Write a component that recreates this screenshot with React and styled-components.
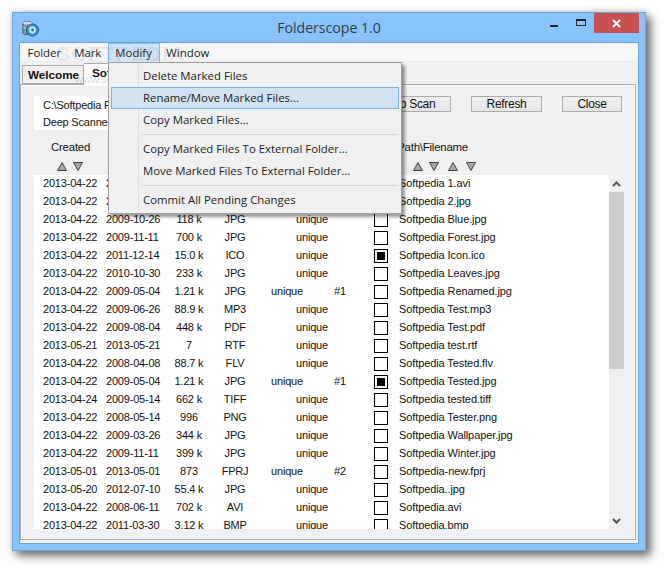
import React from "react";
import styled, { createGlobalStyle } from "styled-components";

const GlobalStyle = createGlobalStyle`
	html, body {
		margin: 0;
		padding: 0;
		background: #fff;
	}
	body {
		font-family: "Liberation Sans", Arial, sans-serif;
		font-size: 11px;
		color: #111;
	}
`

const Page = styled.div`
	width: 666px;
	height: 572px;
	padding: 12px 0 0 12px;
	box-sizing: border-box;
	overflow: hidden;
`

const Frame = styled.div`
	width: 634px;
	height: 539px;
	box-sizing: border-box;
	display: flex;
	flex-direction: column;
	padding: 0 6px 6px;
	background: #88c3fb;
	border: 1px solid #6aa5dc;
	box-shadow: 5px 5px 9px rgba(0,0,0,0.55), 0 0 7px rgba(0,0,0,0.2);
`

const TitleBar = styled.div`
	height: 29px;
	flex: none;
	display: grid;
	grid-template-columns: 1fr auto 1fr;
	align-items: center;
`

const AppIcon = styled.svg`
	width: 17px;
	height: 17px;
	margin: 1px 0 0 3px;
`

const Title = styled.div`
	font-family: "Open Sans", sans-serif;
	font-size: 14.1px;
	color: #333c40;
	margin-top: -1px;
`

const Controls = styled.div`
	justify-self: end;
	display: flex;
	align-items: flex-start;
	height: 100%;
`

const Minimize = styled.div`
	width: 8px;
	height: 2px;
	margin: 12px 18px 0 0;
	background: #222;
`

const Restore = styled.div`
	width: 10px;
	height: 7px;
	margin: 6px 8px 0 0;
	box-sizing: border-box;
	border: 1px solid #222;
	border-top-width: 2px;
`

const CloseBox = styled.div`
	width: 45px;
	height: 20px;
	display: grid;
	place-items: center;
	background: #c75050;
`

const Client = styled.div`
	position: relative;
	flex: 1;
	min-height: 0;
	display: flex;
	flex-direction: column;
	background: #f0f0f0;
	border: 1px solid #6aa5dc;
`

const MenuBar = styled.div`
	height: 19px;
	flex: none;
	display: flex;
	padding-left: 1px;
	background: #f5f6f7;
	border-bottom: 1px solid #e9ecee;
	box-sizing: border-box;
	font-family: "Open Sans", sans-serif;
	font-size: 11.4px;
	color: #1d1d1d;
`

const MenuTitle = styled.div`
	display: flex;
	align-items: center;
	padding: ${props => props.$open ? `0 7px 2px 6.5px` : `0 5.5px 2px`};
	box-sizing: border-box;
	height: 20px;
	border: 1px solid ${props => props.$open ? `#84bdf0` : `transparent`};
	background: ${props => props.$open ? `#cfe4f6` : `transparent`};
`

const TabStrip = styled.div`
	height: 22px;
	flex: none;
	display: flex;
	align-items: flex-end;
	padding-left: 2px;
	font-weight: 700;
	font-size: 11.7px;
`

const Tab = styled.div`
	box-sizing: border-box;
	height: ${props => props.$active ? `22px` : `19px`};
	width: ${props => props.$active ? `80px` : `62px`};
	margin-bottom: ${props => props.$active ? `-1px` : `0`};
	padding: ${props => props.$active ? `2px 0 0 8px` : `2px 0 0 5px`};
	background: ${props => props.$active ? `#fff` : `#f0f0f0`};
	border: 1px solid #acacac;
	border-bottom: ${props => props.$active ? `none` : `1px solid #acacac`};
	border-left: ${props => props.$active ? `none` : `1px solid #acacac`};
	position: relative;
	z-index: 1;
`

const Panel = styled.div`
	flex: 1;
	min-height: 0;
	margin: 0 2px 3px 0;
	padding: 11px 11px 10px 13px;
	display: flex;
	flex-direction: column;
	box-sizing: border-box;
	background: #f0f0f0;
	border: 1px solid #acacac;
	box-shadow: inset 0 0 0 1px #fff;
`

const ControlRow = styled.div`
	height: 34px;
	flex: none;
	display: flex;
	align-items: flex-start;
`

const InfoBox = styled.div`
	width: 300px;
	height: 34px;
	padding: 0 9px;
	box-sizing: border-box;
	display: flex;
	flex-direction: column;
	justify-content: space-around;
	background: #fff;
	letter-spacing: -0.2px;
`

const Button = styled.div`
	width: ${props => props.$width}px;
	margin-left: ${props => props.$gap}px;
	height: 16px;
	box-sizing: border-box;
	display: grid;
	place-items: center;
	background: linear-gradient(#f0f0f0, #e5e5e5);
	border: 1px solid #acacac;
	font-size: 12px;
	letter-spacing: -0.3px;
`

const HeaderRow = styled.div`
	height: 18px;
	margin-top: 8px;
	flex: none;
	display: flex;
	justify-content: space-between;
	align-items: center;
	padding: 0 156px 0 17px;
	font-size: 11.4px;
	letter-spacing: -0.2px;
`

const SortRow = styled.div`
	height: 19px;
	flex: none;
	display: flex;
	align-items: center;
	padding: 2px 0 0 23px;
	box-sizing: border-box;
`

const Arrow = styled.svg`
	width: 10px;
	height: 9px;
	flex: none;
	margin-left: ${props => props.$gap}px;
`

const ListArea = styled.div`
	flex: 1;
	min-height: 0;
	display: flex;
`

const List = styled.div`
	flex: 1;
	overflow: hidden;
	background: #fff;
`

const Rows = styled.div`
	margin-top: -1px;
`

const Row = styled.div`
	height: 18px;
	display: grid;
	grid-template-columns: 68px 62px 50px 42px 112px 25px 1fr;
	align-items: center;
	letter-spacing: -0.2px;
	white-space: nowrap;
`

const DateCell = styled.div`
	padding-left: ${props => props.$first ? `9px` : `4px`};
`

const CenterCell = styled.div`
	text-align: center;
`

const DupCell = styled.div`
	display: grid;
	grid-template-columns: 62px 44px;
	text-align: center;
`

const Check = styled.div`
	width: 14px;
	height: 14px;
	margin: 2px 0 0 6px;
	box-sizing: border-box;
	padding: 2px;
	border: 1px solid #000;
	&::after {
		content: "";
		display: ${props => props.$on ? `block` : `none`};
		width: 8px;
		height: 8px;
		background: #000;
	}
`

const FileName = styled.div`
	padding-left: 6px;
	letter-spacing: -0.1px;
`

const ScrollBar = styled.div`
	width: 15px;
	flex: none;
	display: flex;
	flex-direction: column;
`

const ScrollArrow = styled.div`
	height: 17px;
	flex: none;
	display: grid;
	place-items: center;
	margin-top: ${props => props.$bottom ? `auto` : `0`};
`

const Thumb = styled.div`
	height: 177px;
	flex: none;
	background: #cdcdcd;
`

const DropMenu = styled.div`
	position: absolute;
	z-index: 5;
	left: 88px;
	top: 19px;
	width: 294px;
	height: 152px;
	box-sizing: border-box;
	padding: 2px;
	display: flex;
	flex-direction: column;
	background: #f0f0f0;
	border: 1px solid #a0a0a0;
	box-shadow: 3px 3px 3px rgba(0,0,0,0.4);
	font-family: "Open Sans", sans-serif;
	font-size: 11.4px;
	color: #1d1d1d;
	&::before {
		content: "";
		position: absolute;
		left: 29px;
		top: 2px;
		bottom: 2px;
		width: 1px;
		background: #dcdcdc;
	}
`

const DropItem = styled.div`
	height: 22px;
	flex: none;
	box-sizing: border-box;
	display: flex;
	align-items: center;
	padding: 0 0 2px 31px;
	position: relative;
	border: 1px solid ${props => props.$hover ? `#7eb4ea` : `transparent`};
	background: ${props => props.$hover ? `#d1e2f2` : `transparent`};
`

const DropSep = styled.div`
	height: 1px;
	flex: none;
	margin: 3px 1px 3px 30px;
	background: #d7d7d7;
`

const Watermark = styled.div`
	position: absolute;
	z-index: ${props => props.$big ? 6 : 2};
	left: ${props => props.$big ? `36px` : `55px`};
	top: ${props => props.$big ? `-1px` : `30px`};
	font-weight: ${props => props.$big ? 700 : 400};
	font-size: ${props => props.$big ? `21px` : `11px`};
	letter-spacing: ${props => props.$big ? `1px` : `0`};
	color: rgba(120,120,120,${props => props.$big ? 0.12 : 0.3});
	pointer-events: none;
	white-space: nowrap;
`

const files = [
	["2013-04-22", "2009-10-12", "101 k", "AVI", "", false, "Softpedia 1.avi"],
	["2013-04-22", "2009-10-12", "212 k", "JPG", "", false, "Softpedia 2.jpg"],
	["2013-04-22", "2009-10-26", "118 k", "JPG", "", false, "Softpedia Blue.jpg"],
	["2013-04-22", "2009-11-11", "700 k", "JPG", "", false, "Softpedia Forest.jpg"],
	["2013-04-22", "2011-12-14", "15.0 k", "ICO", "", true, "Softpedia Icon.ico"],
	["2013-04-22", "2010-10-30", "233 k", "JPG", "", false, "Softpedia Leaves.jpg"],
	["2013-04-22", "2009-05-04", "1.21 k", "JPG", "#1", false, "Softpedia Renamed.jpg"],
	["2013-04-22", "2009-06-26", "88.9 k", "MP3", "", false, "Softpedia Test.mp3"],
	["2013-04-22", "2009-08-04", "448 k", "PDF", "", false, "Softpedia Test.pdf"],
	["2013-05-21", "2013-05-21", "7", "RTF", "", false, "Softpedia test.rtf"],
	["2013-04-22", "2008-04-08", "88.7 k", "FLV", "", false, "Softpedia Tested.flv"],
	["2013-04-22", "2009-05-04", "1.21 k", "JPG", "#1", true, "Softpedia Tested.jpg"],
	["2013-04-24", "2009-05-14", "662 k", "TIFF", "", false, "Softpedia tested.tiff"],
	["2013-04-22", "2008-05-14", "996", "PNG", "", false, "Softpedia Tester.png"],
	["2013-04-22", "2009-03-26", "344 k", "JPG", "", false, "Softpedia Wallpaper.jpg"],
	["2013-04-22", "2009-11-11", "399 k", "JPG", "", false, "Softpedia Winter.jpg"],
	["2013-05-01", "2013-05-01", "873", "FPRJ", "#2", false, "Softpedia-new.fprj"],
	["2013-05-20", "2012-07-10", "55.4 k", "JPG", "", false, "Softpedia..jpg"],
	["2013-04-22", "2008-06-11", "702 k", "AVI", "", false, "Softpedia.avi"],
	["2013-04-22", "2011-03-30", "3.12 k", "BMP", "", false, "Softpedia.bmp"],
]

const SortArrow = ({ gap, down }) => (
	<Arrow $gap={gap} viewBox="0 0 10 9">
		<path
			d={down ? "M0.5 0.5H9.5L5 8.5Z" : "M5 0.5L9.5 8.5H0.5Z"}
			fill="#a8a8a8"
			stroke="#444"
			strokeWidth="1"
		/>
	</Arrow>
)

const FileRow = ({ file }) => {
	const [created, modified, size, ext, dup, checked, name] = file
	return (
		<Row>
			<DateCell $first>{created}</DateCell>
			<DateCell>{modified}</DateCell>
			<CenterCell>{size}</CenterCell>
			<CenterCell>{ext}</CenterCell>
			{dup ? (
				<DupCell>
					<span>unique</span>
					<span>{dup}</span>
				</DupCell>
			) : (
				<CenterCell>unique</CenterCell>
			)}
			<Check $on={checked} />
			<FileName>{name}</FileName>
		</Row>
	)
}

const App = () => {
	return (
		<Page>
			<GlobalStyle />
			<Frame>
				<TitleBar>
					<AppIcon viewBox="0 0 17 17">
						<path d="M1 3C1 1 10 1 10 3V13C10 15 1 15 1 13Z" fill="#8d9599" stroke="#4a5257" strokeWidth="1" />
						<ellipse cx="5.5" cy="3" rx="4.5" ry="1.6" fill="#d5d9db" />
						<path d="M1 7C3 9 8 9 10 7" fill="none" stroke="#d0d4d6" strokeWidth="1" />
						<circle cx="10.5" cy="10" r="6" fill="#3f97d3" stroke="#17587f" strokeWidth="1" />
						<circle cx="10.5" cy="10" r="3.4" fill="#cfe9f8" />
						<circle cx="10.5" cy="10" r="1.4" fill="#1f6a98" />
					</AppIcon>
					<Title>Folderscope 1.0</Title>
					<Controls>
						<Minimize />
						<Restore />
						<CloseBox>
							<svg width="9" height="9" viewBox="0 0 9 9">
								<path d="M1 1L8 8M8 1L1 8" stroke="#fff" strokeWidth="1.8" />
							</svg>
						</CloseBox>
					</Controls>
				</TitleBar>
				<Client>
					<MenuBar>
						<MenuTitle>Folder</MenuTitle>
						<MenuTitle>Mark</MenuTitle>
						<MenuTitle $open>Modify</MenuTitle>
						<MenuTitle>Window</MenuTitle>
					</MenuBar>
					<TabStrip>
						<Tab>Welcome</Tab>
						<Tab $active>Softpedia</Tab>
					</TabStrip>
					<Panel>
						<ControlRow>
							<InfoBox>
								<span>C:\Softpedia Files</span>
								<span>Deep Scanned</span>
							</InfoBox>
							<Button $width={84} $gap={33}>Stop Scan</Button>
							<Button $width={71} $gap={20}>Refresh</Button>
							<Button $width={60} $gap={20}>Close</Button>
						</ControlRow>
						<HeaderRow>
							<span>Created</span>
							<span>Path\Filename</span>
						</HeaderRow>
						<SortRow>
							<SortArrow gap={0} />
							<SortArrow gap={6} down />
							<SortArrow gap={330} />
							<SortArrow gap={6} down />
							<SortArrow gap={9} />
							<SortArrow gap={8} down />
						</SortRow>
						<ListArea>
							<List>
								<Rows>
									{files.map(file => <FileRow key={file[6]} file={file} />)}
								</Rows>
							</List>
							<ScrollBar>
								<ScrollArrow>
									<svg width="9" height="6" viewBox="0 0 9 6">
										<path d="M1 5L4.5 1.5L8 5" fill="none" stroke="#555" strokeWidth="2" />
									</svg>
								</ScrollArrow>
								<Thumb />
								<ScrollArrow $bottom>
									<svg width="9" height="6" viewBox="0 0 9 6">
										<path d="M1 1L4.5 4.5L8 1" fill="none" stroke="#555" strokeWidth="2" />
									</svg>
								</ScrollArrow>
							</ScrollBar>
						</ListArea>
					</Panel>
					<DropMenu>
						<DropItem>Delete Marked Files</DropItem>
						<DropItem $hover>Rename/Move Marked Files...</DropItem>
						<DropItem>Copy Marked Files...</DropItem>
						<DropSep />
						<DropItem>Copy Marked Files To External Folder...</DropItem>
						<DropItem>Move Marked Files To External Folder...</DropItem>
						<DropSep />
						<DropItem>Commit All Pending Changes</DropItem>
					</DropMenu>
					<Watermark $big>SOFTPEDIA</Watermark>
					<Watermark>www.softpedia.com</Watermark>
				</Client>
			</Frame>
		</Page>
	)
}

export default App
